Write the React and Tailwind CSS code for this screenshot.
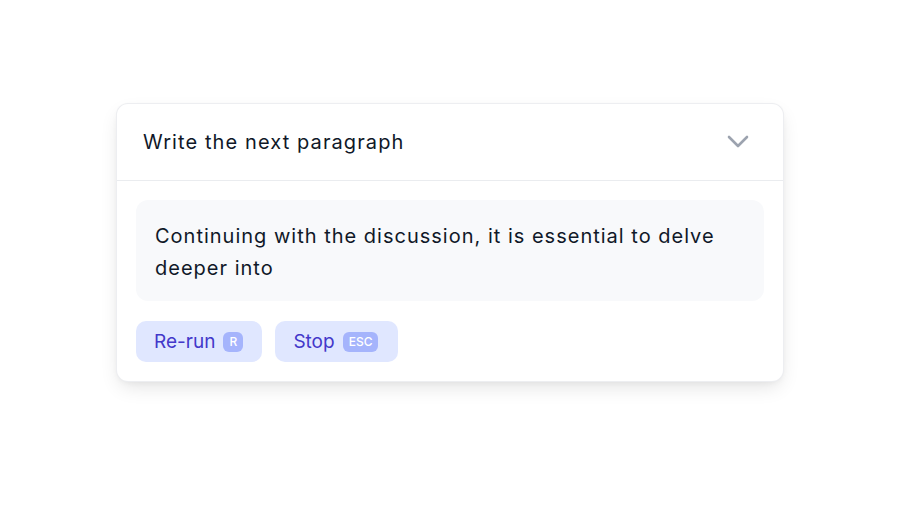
export default function App() {
  return (
    <div
      className="min-h-[514px] bg-white pt-[103px]"
      style={{ fontFamily: "Inter, 'Noto Sans', sans-serif" }}
    >
      <div className="mx-auto w-[668px] rounded-xl border border-gray-200/70 bg-white shadow-[0_8px_20px_-4px_rgba(0,0,0,0.12),0_2px_6px_-2px_rgba(0,0,0,0.06)]">
        <div className="flex h-[77px] items-center justify-between border-b border-gray-200/80 pl-[26px] pr-[34px]">
          <span className="text-[20px] tracking-[0.055em] text-gray-900">Write the next paragraph</span>
          <svg width="22" height="14" viewBox="0 0 22 14" fill="none">
            <path
              d="M2 2l9 9 9-9"
              stroke="#9ca3af"
              strokeWidth="2.6"
              strokeLinecap="round"
              strokeLinejoin="round"
            />
          </svg>
        </div>
        <div className="px-[19px] pb-[19px] pt-[19px]">
          <div className="rounded-xl bg-[#f8f9fb] px-[19px] pb-[17px] pt-[20px] text-[20px] leading-8 tracking-[0.05em] text-gray-900">
            Continuing with the discussion, it is essential to delve deeper into
          </div>
          <div className="mt-5 flex gap-[13px]">
            <button className="flex h-[41px] items-center gap-2 rounded-[10px] bg-[#e0e7ff] pl-[18px] pr-[19px] pt-px text-[19px] text-[#4338ca]">
              Re-run
              <span className="flex h-5 w-5 items-center justify-center rounded-md bg-[#a5b4fc] text-[12px] font-medium text-white">
                R
              </span>
            </button>
            <button className="flex h-[41px] items-center gap-2 rounded-[10px] bg-[#e0e7ff] pl-[18px] pr-[20px] pt-px text-[19px] text-[#4338ca]">
              Stop
              <span className="flex h-5 items-center justify-center rounded-md bg-[#a5b4fc] px-[6px] text-[12px] font-medium text-white">
                ESC
              </span>
            </button>
          </div>
        </div>
      </div>
    </div>
  );
}
